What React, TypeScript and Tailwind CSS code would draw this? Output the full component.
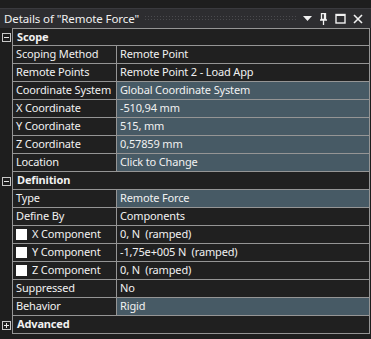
import React from 'react';

type Row =
  | { kind: 'header'; label: string; open: boolean }
  | { kind: 'prop'; label: string; value: string; hi?: boolean; check?: boolean };

const rows: Row[] = [
  { kind: 'header', label: 'Scope', open: true },
  { kind: 'prop', label: 'Scoping Method', value: 'Remote Point' },
  { kind: 'prop', label: 'Remote Points', value: 'Remote Point 2 - Load App' },
  { kind: 'prop', label: 'Coordinate System', value: 'Global Coordinate System', hi: true },
  { kind: 'prop', label: 'X Coordinate', value: '-510,94 mm', hi: true },
  { kind: 'prop', label: 'Y Coordinate', value: '515, mm', hi: true },
  { kind: 'prop', label: 'Z Coordinate', value: '0,57859 mm', hi: true },
  { kind: 'prop', label: 'Location', value: 'Click to Change', hi: true },
  { kind: 'header', label: 'Definition', open: true },
  { kind: 'prop', label: 'Type', value: 'Remote Force', hi: true },
  { kind: 'prop', label: 'Define By', value: 'Components' },
  { kind: 'prop', label: 'X Component', value: '0, N  (ramped)', check: true },
  { kind: 'prop', label: 'Y Component', value: '-1,75e+005 N  (ramped)', check: true },
  { kind: 'prop', label: 'Z Component', value: '0, N  (ramped)', check: true },
  { kind: 'prop', label: 'Suppressed', value: 'No' },
  { kind: 'prop', label: 'Behavior', value: 'Rigid', hi: true },
  { kind: 'header', label: 'Advanced', open: false },
];

const ExpandBox: React.FC<{ open: boolean }> = ({ open }) => (
  <svg width="9" height="9" viewBox="0 0 9 9" className="block">
    <rect x="0.5" y="0.5" width="8" height="8" fill="none" stroke="#c8c8c8" />
    <path d="M2 4.5h5" stroke="#e6e6e6" />
    {!open && <path d="M4.5 2v5" stroke="#e6e6e6" />}
  </svg>
);

const TitleIcons: React.FC = () => (
  <div className="flex items-center gap-[7px] pr-[8px]">
    <svg width="9" height="5" viewBox="0 0 9 5">
      <path d="M0 0h9L4.5 5z" fill="#f1f1f1" />
    </svg>
    <svg width="9" height="12" viewBox="0 0 9 12">
      <path d="M2.5 0.5h4v6h-4z M1 7h7 M4.5 7v5 M5.5 1v5" fill="none" stroke="#f1f1f1" strokeWidth="1.3" />
    </svg>
    <svg width="11" height="11" viewBox="0 0 11 11">
      <rect x="1" y="1.5" width="9" height="8.5" fill="none" stroke="#f1f1f1" strokeWidth="1.4" />
      <path d="M1 2h9" stroke="#f1f1f1" strokeWidth="2" />
    </svg>
    <svg width="10" height="10" viewBox="0 0 10 10">
      <path d="M1 1l8 8M9 1l-8 8" stroke="#f1f1f1" strokeWidth="1.6" />
    </svg>
  </div>
);

export default function App() {
  return (
    <div className="w-[371px] h-[339px] bg-[#1e1e1e] font-['Noto_Sans',sans-serif] text-[11px] text-[#f1f1f1] overflow-hidden">
      <div className="h-[8px]" />
      <div className="h-[20px] border-t border-[#3a3a3e] bg-[#2d2d30] flex items-center">
        <span className="pl-[4px] pr-[5px] text-[11.5px] leading-none tracking-[-0.1px] whitespace-nowrap">Details of "Remote Force"</span>
        <div className="flex-1 h-[7px] mr-[6px] bg-[radial-gradient(#4a4a4e_0.8px,transparent_0.8px)] bg-[length:3px_3px]" />
        <TitleIcons />
      </div>
      <div className="flex flex-col tracking-[-0.15px]">
        {rows.map((r, i) => (
          <div key={i} className="flex h-[18px]">
            <div className="w-[12px] shrink-0 flex items-center pl-[2px]">
              {r.kind === 'header' && <ExpandBox open={r.open} />}
            </div>
            <div
              className={`flex flex-1 h-[18px] mr-[1px] border-l border-r border-b border-[#959595] bg-[#202020] ${
                i === 0 ? 'border-t' : ''
              }`}
            >
              {r.kind === 'header' ? (
                <div className="pl-[4px] flex items-center font-bold">{r.label}</div>
              ) : (
                <>
                  <div className="w-[104px] shrink-0 border-r border-[#959595] flex items-center pl-[3px] whitespace-nowrap overflow-hidden">
                    {r.check && <span className="w-[11px] h-[11px] bg-white mr-[5px] shrink-0" />}
                    {r.label}
                  </div>
                  <div className={`flex-1 flex items-center pl-[3px] whitespace-pre ${r.hi ? 'bg-[#475a65]' : ''}`}>
                    {r.value}
                  </div>
                </>
              )}
            </div>
          </div>
        ))}
      </div>
    </div>
  );
}
